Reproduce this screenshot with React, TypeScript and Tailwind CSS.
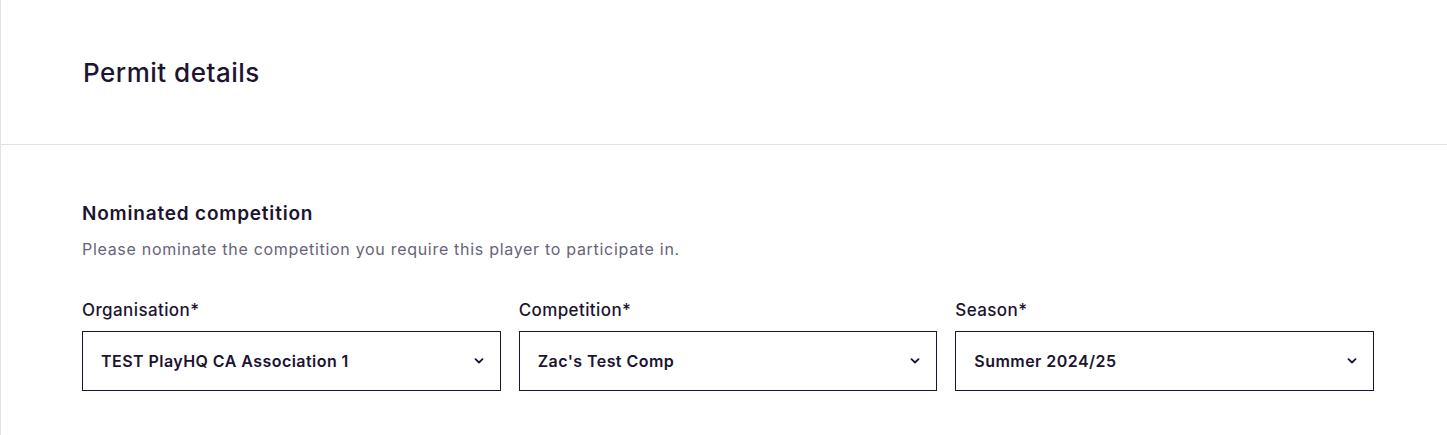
import React from 'react';

const fields = [
  { label: 'Organisation*', value: 'TEST PlayHQ CA Association 1' },
  { label: 'Competition*', value: "Zac's Test Comp" },
  { label: 'Season*', value: 'Summer 2024/25' },
];

const Chevron = () => (
  <svg width="10" height="6" viewBox="0 0 10 6" fill="none">
    <path d="M1.5 1.2 5 4.5 8.5 1.2" stroke="#1c1430" strokeWidth="1.8" strokeLinecap="round" strokeLinejoin="round" />
  </svg>
);

const SelectBox = ({ label, value }: { label: string; value: string }) => (
  <div className="flex flex-col">
    <label className="text-[17px] leading-[20px] font-medium tracking-[0.4px] text-[#1c1430] mb-[11px]">{label}</label>
    <div className="h-[60px] border border-[#1c1430] flex items-center justify-between pl-[18px] pr-[16px] bg-white">
      <span className="text-[16px] font-semibold tracking-[0.45px] text-[#1c1430]">{value}</span>
      <Chevron />
    </div>
  </div>
);

export default function App() {
  return (
    <div className="min-h-[435px] bg-white border-l border-[#e1e1e8]" style={{ fontFamily: 'Inter, "Noto Sans", sans-serif' }}>
      <div className="h-[145px] flex items-center pl-[82px] border-b border-[#e1e1e8]">
        <h1 className="text-[26px] font-medium text-[#1c1430] tracking-[0.5px]">Permit details</h1>
      </div>
      <div className="pl-[81px] pt-[57px]">
        <h2 className="text-[19px] leading-[24px] font-semibold tracking-[0.8px] text-[#1c1430]">Nominated competition</h2>
        <p className="mt-[11px] text-[16px] leading-[24px] tracking-[0.7px] text-[#676478]">Please nominate the competition you require this player to participate in.</p>
        <div className="mt-[39px] grid grid-cols-3 gap-[18px] w-[1292px]">
          {fields.map((f) => (
            <SelectBox key={f.label} label={f.label} value={f.value} />
          ))}
        </div>
      </div>
    </div>
  );
}
